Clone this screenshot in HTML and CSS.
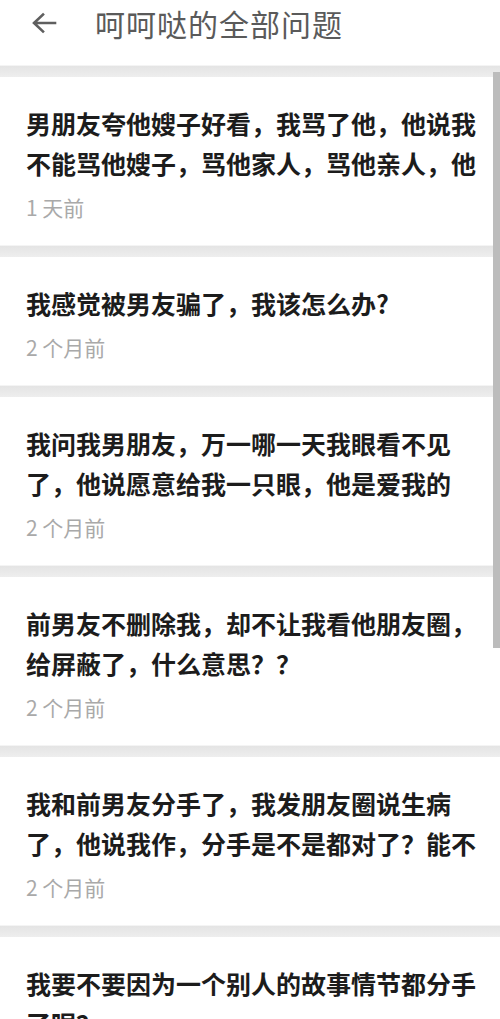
FILE: index.html
```html
<!DOCTYPE html>
<html lang="zh-CN">
<head>
<meta charset="utf-8">
<title>呵呵哒的全部问题</title>
<link rel="stylesheet" href="styles.css">
</head>
<body>
<div class="app">
  <header class="topbar">
    <svg class="back" viewBox="0 0 26 22" width="26" height="22" aria-hidden="true">
      <path d="M24 11H3.5M12 2.5L3 11l9 8.5" fill="none" stroke="#5f5f5f" stroke-width="2.6" stroke-linecap="square"/>
    </svg>
    <h1 class="title">呵呵哒的全部问题</h1>
  </header>
  <main class="list">
    <div class="sep"></div>
    <article class="card">
      <p class="q">男朋友夸他嫂子好看，我骂了他，他说我不能骂他嫂子，骂他家人，骂他亲人，他说我不尊重他的家人</p>
      <p class="time">1 天前</p>
    </article>
    <div class="sep"></div>
    <article class="card">
      <p class="q">我感觉被男友骗了，我该怎么办?</p>
      <p class="time">2 个月前</p>
    </article>
    <div class="sep"></div>
    <article class="card">
      <p class="q">我问我男朋友，万一哪一天我眼看不见了，他说愿意给我一只眼，他是爱我的吗？</p>
      <p class="time">2 个月前</p>
    </article>
    <div class="sep"></div>
    <article class="card">
      <p class="q">前男友不删除我，却不让我看他朋友圈，给屏蔽了，什么意思？？</p>
      <p class="time">2 个月前</p>
    </article>
    <div class="sep"></div>
    <article class="card">
      <p class="q">我和前男友分手了，我发朋友圈说生病了，他说我作，分手是不是都对了？能不能挽回</p>
      <p class="time">2 个月前</p>
    </article>
    <div class="sep"></div>
    <article class="card">
      <p class="q">我要不要因为一个别人的故事情节都分手了呢？</p>
      <p class="time">2 个月前</p>
    </article>
  </main>
  <div class="scroll-thumb"></div>
</div>
</body>
</html>
```

FILE: styles.css
```css
html, body {
  margin: 0;
  padding: 0;
  background: #ffffff;
}
body {
  font-family: "Noto Sans CJK SC", "Noto Sans", sans-serif;
  width: 500px;
  height: 1019px;
  overflow: hidden;
}
.app {
  position: relative;
  width: 500px;
}
.topbar {
  height: 65px;
  display: flex;
  align-items: flex-start;
  box-sizing: border-box;
  background: #fff;
}
.back {
  margin-left: 31px;
  margin-top: 12px;
  flex: none;
}
.title {
  margin: 0 0 0 38px;
  font-size: 30px;
  font-weight: 400;
  line-height: 46px;
  color: #5a5a5a;
  letter-spacing: 1px;
}
.list {
  display: flex;
  flex-direction: column;
}
.sep {
  height: 12px;
  background: linear-gradient(#e4e4e4, #eeeeee);
  border-top: 1px solid #f4f4f4;
  box-sizing: border-box;
}
.card {
  background: #fff;
  padding: 26px;
}
.q {
  margin: 0;
  font-size: 25px;
  line-height: 40px;
  font-weight: 700;
  color: #1c1c1c;
  max-height: 80px;
  overflow: hidden;
  width: 450px;
}
.time {
  margin: 12px 0 0;
  font-size: 21px;
  line-height: 24px;
  color: #a9a9a9;
}
.scroll-thumb {
  position: absolute;
  right: 0;
  top: 72px;
  width: 7px;
  height: 576px;
  background: #bcbcbc;
}
```
